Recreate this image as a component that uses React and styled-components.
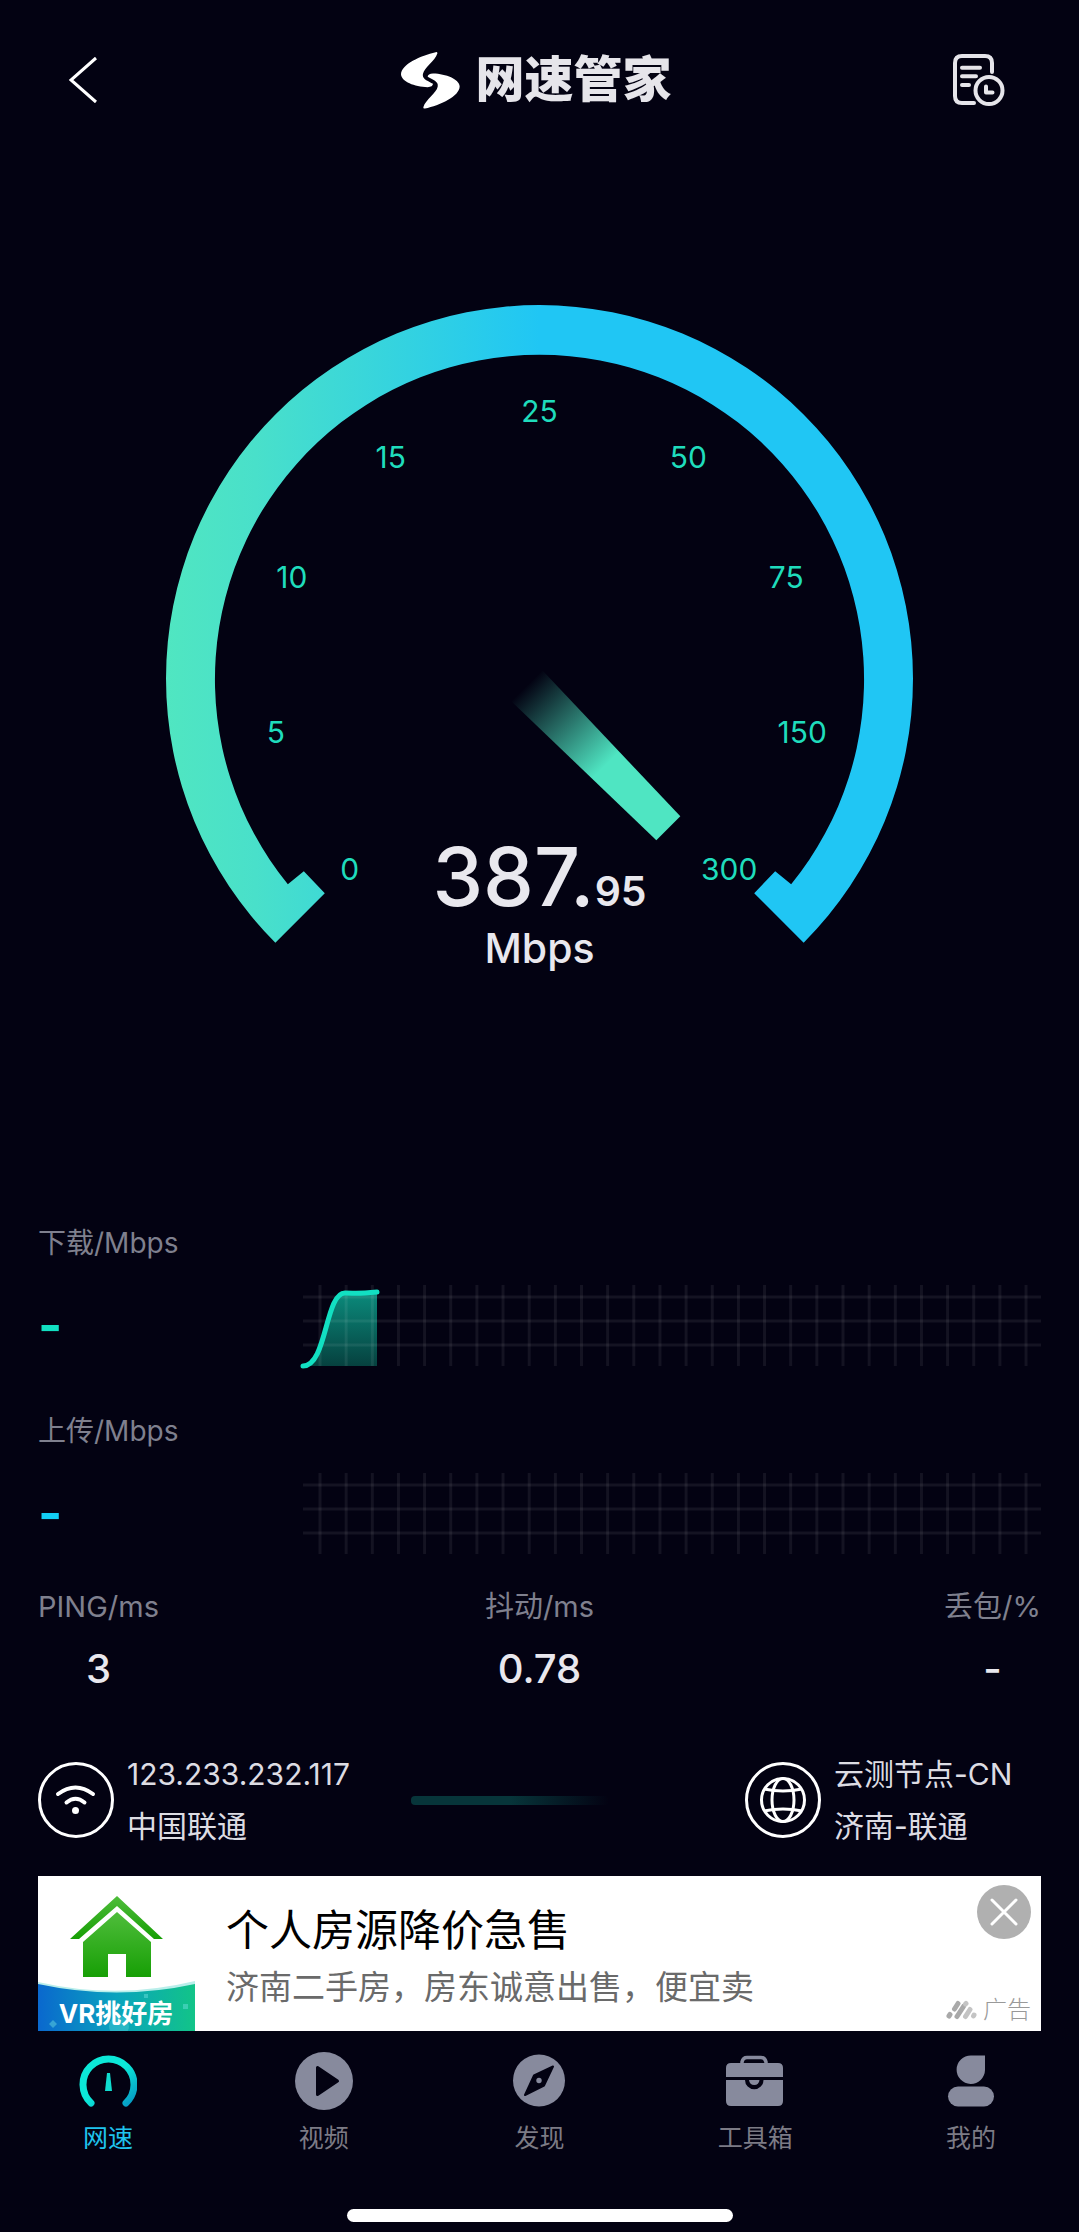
import React from 'react';
import styled, { createGlobalStyle } from 'styled-components';

const GlobalStyle = createGlobalStyle`
  * {
    box-sizing: border-box;
  }

  body {
    margin: 0;
    background: #030212;
    color: #e9e8ee;
    font-family: Inter, 'Noto Sans CJK SC', sans-serif;
  }

  button {
    padding: 0;
    border: 0;
    background: none;
    color: inherit;
    font: inherit;
    cursor: pointer;
  }

  svg {
    display: block;
  }
`;

const Page = styled.div`
  display: flex;
  flex-direction: column;
  min-height: 100vh;
`;

const Header = styled.header`
  display: flex;
  align-items: center;
  justify-content: space-between;
  height: 160px;
  padding: 0 74px 0 68px;
`;

const HeaderButton = styled.button`
  display: flex;
  justify-content: ${props => (props.$end ? 'flex-end' : 'flex-start')};
  width: 58px;
`;

const Brand = styled.h1`
  display: flex;
  align-items: center;
  gap: 15px;
  margin: 0;
  font-size: 49px;
  line-height: 56px;
  font-weight: 900;
  color: #e6e5ea;
`;

const Main = styled.main`
  padding: 0 38px;
`;

const GaugeArea = styled.section`
  padding: 145px 128px 0;
  margin-bottom: 239px;

  svg {
    width: 100%;
    height: auto;
    overflow: visible;
  }
`;

const ScaleText = styled.text`
  fill: #1fdcbc;
  font-size: 30px;
  text-anchor: middle;
`;

const ReadingText = styled.text`
  fill: #e9e8ee;
  font-size: ${props => props.$size}px;
  font-weight: 500;
  text-anchor: middle;
`;

const SpeedBlock = styled.section`
  margin-bottom: ${props => (props.$last ? 32 : 44)}px;
`;

const SpeedLabel = styled.h2`
  margin: 0 0 22px;
  font-size: 28px;
  line-height: 40px;
  font-weight: 400;
  color: #7f808e;
`;

const SpeedRow = styled.div`
  display: flex;
  align-items: center;
`;

const SpeedValue = styled.div`
  flex: 0 0 265px;
  font-size: 52px;
  line-height: 56px;
  font-weight: 700;
  color: ${props => props.$color};
`;

const ChartBox = styled.div`
  flex: 1;

  svg {
    width: 100%;
    height: auto;
    overflow: visible;
  }
`;

const Metrics = styled.dl`
  display: grid;
  grid-template-columns: 1fr auto 1fr;
  margin: 0 0 55px;
`;

const Metric = styled.div`
  text-align: center;

  &:first-child {
    justify-self: start;
  }

  &:last-child {
    justify-self: end;
  }
`;

const MetricLabel = styled.dt`
  margin-bottom: 18px;
  font-size: 29px;
  line-height: 40px;
  font-weight: 400;
  color: #7f808e;
`;

const MetricValue = styled.dd`
  margin: 0;
  font-size: 40px;
  line-height: 48px;
  font-weight: 500;
`;

const Route = styled.section`
  display: grid;
  grid-template-columns: 373fr 334fr 296fr;
  align-items: center;
  margin-bottom: 24px;
`;

const Endpoint = styled.div`
  display: flex;
  align-items: center;
  gap: 13px;
  font-size: 30px;
  line-height: 52px;
  color: #dddce3;
  white-space: nowrap;
`;

const Progress = styled.div`
  width: 198px;
  height: 9px;
  border-radius: 4px;
  background: linear-gradient(90deg, #07353a 50%, rgba(7, 53, 58, 0));
`;

const Ad = styled.aside`
  position: relative;
  display: flex;
  height: 155px;
  background: #fff;
`;

const AdBody = styled.div`
  padding: 24px 0 0 31px;
`;

const AdTitle = styled.h3`
  margin: 0;
  font-size: 43px;
  line-height: 60px;
  font-weight: 400;
  color: #000;
`;

const AdText = styled.p`
  margin: 0;
  font-size: 33px;
  line-height: 54px;
  font-weight: 400;
  color: #6a6a6a;
`;

const AdClose = styled.button`
  position: absolute;
  top: 9px;
  right: 10px;
`;

const AdTag = styled.div`
  position: absolute;
  right: 10px;
  bottom: 3px;
  display: flex;
  align-items: center;
  gap: 6px;
  font-size: 24px;
  line-height: 36px;
  font-weight: 300;
  color: #999;
`;

const TabBar = styled.nav`
  display: grid;
  grid-template-columns: repeat(5, 1fr);
  padding-top: 21px;
`;

const Tab = styled.a`
  display: flex;
  flex-direction: column;
  align-items: center;
  gap: 12px;
  font-size: 25px;
  line-height: 32px;
  color: ${props => (props.$active ? '#1fc3ee' : '#7c7b85')};
  text-decoration: none;
`;

const HomeBar = styled.div`
  width: 386px;
  height: 13px;
  margin: 55px auto 8px;
  border-radius: 7px;
  background: #fff;
`;

const scale = [
  { label: '0', x: 184, y: 576 },
  { label: '5', x: 110, y: 439 },
  { label: '10', x: 126, y: 283 },
  { label: '15', x: 225, y: 163 },
  { label: '25', x: 374, y: 117 },
  { label: '50', x: 523, y: 163 },
  { label: '75', x: 621, y: 283 },
  { label: '150', x: 637, y: 439 },
  { label: '300', x: 564, y: 576 },
];

const Gauge = () => (
  <svg viewBox="0 0 748 680" role="img" aria-label="387.95 Mbps">
    <defs>
      <linearGradient id="ring" gradientUnits="userSpaceOnUse" x1="0" y1="0" x2="748" y2="0">
        <stop offset="0" stopColor="#50e6c1" />
        <stop offset="0.12" stopColor="#49e0ca" />
        <stop offset="0.5" stopColor="#20c6f4" />
      </linearGradient>
      <linearGradient id="needle" gradientUnits="userSpaceOnUse" x1="361" y1="381" x2="440" y2="461">
        <stop offset="0" stopColor="#4fe5c2" stopOpacity="0" />
        <stop offset="1" stopColor="#4fe5c2" />
      </linearGradient>
    </defs>
    <path
      fill="url(#ring)"
      d="M109.500 638.500 A374 374 0 1 1 638.500 638.500 L589 589 L610 567 L626 580 A325 325 0 1 0 122 580 L138 567 L159 589 Z"
    />
    <path fill="url(#needle)" d="M377 366 L515 512 L491 536 L346 397 Z" />
    {scale.map(item => (
      <ScaleText key={item.label} x={item.x} y={item.y}>{item.label}</ScaleText>
    ))}
    <ReadingText x="374" y="602" $size={81}>
      387.<tspan fontSize="41" fontWeight="600">95</tspan>
    </ReadingText>
    <ReadingText x="374" y="659" $size={41}>Mbps</ReadingText>
  </svg>
);

const columns = Array.from({ length: 28 }, (_, i) => 17 + i * 26.15);
const rows = [12, 36, 60];

const Chart = ({ filled }) => (
  <svg viewBox="0 0 738 82" aria-hidden="true">
    {filled && (
      <>
        <defs>
          <linearGradient id="area" x1="0" y1="0" x2="0" y2="1">
            <stop offset="0" stopColor="#0b8b7c" />
            <stop offset="1" stopColor="#06413f" />
          </linearGradient>
        </defs>
        <path fill="url(#area)" d="M0 81 C24 81 22 8 42 8 C54 8 52 9 74 7 V81 Z" />
      </>
    )}
    <g stroke="#fff" strokeOpacity="0.07" strokeWidth="3">
      {columns.map(x => <line key={x} x1={x} x2={x} y1="0" y2="81" />)}
      {rows.map(y => <line key={y} x1="0" x2="738" y1={y} y2={y} />)}
    </g>
    {filled && (
      <path
        d="M0 81 C24 81 22 8 42 8 C54 8 52 9 74 7"
        fill="none"
        stroke="#12e0c2"
        strokeWidth="5"
        strokeLinecap="round"
      />
    )}
  </svg>
);

const BackIcon = () => (
  <svg width="32" height="50" viewBox="0 0 32 50" fill="none" stroke="#fff" strokeWidth="3">
    <path d="M28 3 L3 25 L28 47" />
  </svg>
);

const HistoryIcon = () => (
  <svg width="52" height="54" viewBox="0 0 52 54" fill="none" stroke="#e6e5ea" strokeWidth="4" strokeLinecap="round" strokeLinejoin="round">
    <path d="M39 19 V10 Q39 3 32 3 H9 Q2 3 2 10 V43 Q2 50 9 50 H21" />
    <path d="M9 14.700 H27 M9 23.300 H23 M9 32 H16" />
    <circle cx="36" cy="37.500" r="13.500" />
    <path d="M33 33.500 V39.500 H39.500" />
  </svg>
);

const swoosh = 'M172 66 C128 76 68 102 68 133 C70 154 108 170 148 171 C158 171 164 167 164 161 C150 152 130 148 134 131 C138 112 170 92 177 70 Q178 65 172 66 Z';

const Logo = () => (
  <svg width="59" height="57" viewBox="68 66 177 170" fill="#fff">
    <path d={swoosh} />
    <path d={swoosh} transform="rotate(180 156 150.500)" />
  </svg>
);

const WifiIcon = () => (
  <svg width="76" height="76" viewBox="0 0 76 76" fill="none" stroke="#fff" strokeWidth="4" strokeLinecap="round">
    <circle cx="38" cy="38" r="36.500" strokeWidth="3" />
    <path d="M20 32 Q37.500 19 55 32 M28.500 40.500 Q37.500 33 46.500 40.500" />
    <circle cx="37.500" cy="48.500" r="3.500" fill="#fff" stroke="none" />
  </svg>
);

const GlobeIcon = () => (
  <svg width="76" height="76" viewBox="0 0 76 76" fill="none" stroke="#fff" strokeWidth="3">
    <circle cx="38" cy="38" r="36.500" />
    <circle cx="38" cy="38" r="21.500" />
    <ellipse cx="38" cy="38" rx="11" ry="21.500" />
    <path d="M19 27 Q38 31 57 27 M19 49 Q38 45 57 49" />
  </svg>
);

const HouseBanner = () => (
  <svg width="157" height="155" viewBox="0 0 157 155">
    <defs>
      <linearGradient id="house" x1="0" y1="0" x2="0" y2="1">
        <stop offset="0" stopColor="#4fbd3b" />
        <stop offset="1" stopColor="#179f05" />
      </linearGradient>
      <linearGradient id="sea" x1="0" y1="0" x2="1" y2="0">
        <stop offset="0" stopColor="#0a68ce" />
        <stop offset="0.5" stopColor="#0aa3bd" />
        <stop offset="1" stopColor="#12c488" />
      </linearGradient>
    </defs>
    <path fill="url(#house)" d="M79 20 L125 63 H116 L79 30 L41 63 H32 Z" />
    <path fill="url(#house)" d="M79 36 L113 66 V101 H88 V78 H70 V101 H45 V66 Z" />
    <path fill="#b9eeea" d="M0 106 Q79 124 157 105 V155 H0 Z" />
    <path fill="url(#sea)" d="M0 108 Q79 125 157 108 V155 H0 Z" />
    <g fill="#6fe0e0" fillOpacity="0.45">
      <path d="M15 144 L19 148 L15 152 L11 148 Z" />
      <rect x="145" y="128" width="5" height="5" />
      <rect x="106" y="118" width="4" height="4" />
      <circle cx="81" cy="150" r="10" fillOpacity="0.3" />
    </g>
    <text x="78" y="147" textAnchor="middle" fontSize="26" fontWeight="700" fill="#fff">VR挑好房</text>
  </svg>
);

const CloseIcon = () => (
  <svg width="54" height="54" viewBox="0 0 54 54">
    <circle cx="27" cy="27" r="27" fill="#b0b0b0" />
    <path d="M15 15 L39 39 M39 15 L15 39" stroke="#fff" strokeWidth="3" strokeLinecap="round" />
  </svg>
);

const AdMark = () => (
  <svg width="31" height="20" viewBox="0 0 31 20" fill="none" strokeWidth="5" strokeLinecap="round">
    <path stroke="#a9a9a9" d="M3 16 L4 14.500 M8.500 9 L12 3.500 M11 16.500 L17.500 6.500" />
    <path stroke="#c4c4c4" d="M19.500 16.500 L24 9.500 M19.500 4 L20 3.500 M27.500 16 L28 15" />
  </svg>
);

const icons = {
  speed: (
    <>
      <defs>
        <linearGradient id="dial" x1="0" y1="0" x2="1" y2="1">
          <stop offset="0.5" stopColor="#0ce8d8" />
          <stop offset="1" stopColor="#0598c4" />
        </linearGradient>
      </defs>
      <path d="M12 51 A25.500 25.500 0 1 1 47 51" fill="none" stroke="url(#dial)" strokeWidth="7" strokeLinecap="round" />
      <path d="M28 21 H31 L33 39 H26 Z" fill="#10dccf" />
    </>
  ),
  video: (
    <>
      <circle cx="29" cy="29" r="29" />
      <path d="M22.500 15.500 V42.500 L42.500 29 Z" fill="#030212" stroke="#030212" strokeWidth="3" strokeLinejoin="round" />
    </>
  ),
  discover: (
    <>
      <circle cx="29" cy="28.500" r="26" />
      <path d="M43 14.500 L34 33.500 L15 43 L24 23.500 Z" fill="#030212" stroke="#030212" strokeWidth="2" strokeLinejoin="round" />
      <circle cx="29" cy="28.500" r="2.700" />
    </>
  ),
  tools: (
    <>
      <path d="M16 12 V10 Q17 5.500 21 5.500 H35 Q39 5.500 40 10 V12" fill="none" stroke="#878a9d" strokeWidth="3.500" />
      <path d="M5 11 H52 Q57 11 57 16 V25 H0 V16 Q0 11 5 11 Z" />
      <path d="M0 28 H19 A9.200 9.200 0 0 0 37.500 28 H57 V49 Q57 54 52 54 H5 Q0 54 0 49 Z" />
      <path d="M23 28 A5.300 5.800 0 0 0 33.500 28 Z" />
    </>
  ),
  mine: (
    <>
      <path d="M43 3.500 V18 A14.200 14.200 0 1 1 29 3.500 Z" />
      <rect x="6" y="34.500" width="46" height="20" rx="10" />
    </>
  ),
};

const tabs = [
  { id: 'speed', label: '网速', active: true },
  { id: 'video', label: '视频' },
  { id: 'discover', label: '发现' },
  { id: 'tools', label: '工具箱' },
  { id: 'mine', label: '我的' },
];

const metrics = [
  { label: 'PING/ms', value: '3' },
  { label: '抖动/ms', value: '0.78' },
  { label: '丢包/%', value: '-' },
];

const App = () => {
  return (
    <Page>
      <GlobalStyle />
      <Header>
        <HeaderButton aria-label="返回">
          <BackIcon />
        </HeaderButton>
        <Brand>
          <Logo />
          网速管家
        </Brand>
        <HeaderButton $end aria-label="测速记录">
          <HistoryIcon />
        </HeaderButton>
      </Header>

      <Main>
        <GaugeArea>
          <Gauge />
        </GaugeArea>

        <SpeedBlock>
          <SpeedLabel>下载/Mbps</SpeedLabel>
          <SpeedRow>
            <SpeedValue $color="#12e0c2">-</SpeedValue>
            <ChartBox><Chart filled /></ChartBox>
          </SpeedRow>
        </SpeedBlock>
        <SpeedBlock $last>
          <SpeedLabel>上传/Mbps</SpeedLabel>
          <SpeedRow>
            <SpeedValue $color="#12cff5">-</SpeedValue>
            <ChartBox><Chart /></ChartBox>
          </SpeedRow>
        </SpeedBlock>

        <Metrics>
          {metrics.map(metric => (
            <Metric key={metric.label}>
              <MetricLabel>{metric.label}</MetricLabel>
              <MetricValue>{metric.value}</MetricValue>
            </Metric>
          ))}
        </Metrics>

        <Route>
          <Endpoint>
            <WifiIcon />
            <div>
              <div>123.233.232.117</div>
              <div>中国联通</div>
            </div>
          </Endpoint>
          <Progress />
          <Endpoint>
            <GlobeIcon />
            <div>
              <div>云测节点-CN</div>
              <div>济南-联通</div>
            </div>
          </Endpoint>
        </Route>

        <Ad>
          <HouseBanner />
          <AdBody>
            <AdTitle>个人房源降价急售</AdTitle>
            <AdText>济南二手房，房东诚意出售，便宜卖</AdText>
          </AdBody>
          <AdClose aria-label="关闭广告">
            <CloseIcon />
          </AdClose>
          <AdTag>
            <AdMark />
            广告
          </AdTag>
        </Ad>
      </Main>

      <TabBar>
        {tabs.map(tab => (
          <Tab key={tab.id} href={`#${tab.id}`} $active={tab.active}>
            <svg width="58" height="58" viewBox="0 0 58 58" fill="#878a9d">
              {icons[tab.id]}
            </svg>
            {tab.label}
          </Tab>
        ))}
      </TabBar>
      <HomeBar />
    </Page>
  );
};

export default App;
